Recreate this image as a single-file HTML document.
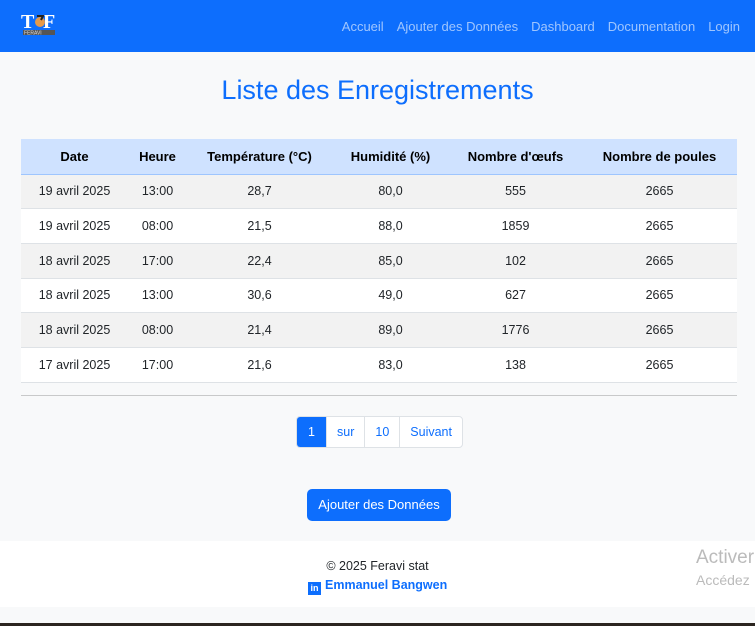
<!DOCTYPE html>
<html><head><meta charset="utf-8"><style>
*{margin:0;padding:0;box-sizing:border-box}
body{width:755px;height:626px;overflow:hidden;background:#f8f9fa;font-family:"Liberation Sans",sans-serif;font-size:13px;color:#212529;position:relative}
.nav{height:52px;background:#0d6efd;position:relative}
.nav .links{position:absolute;right:15px;top:19px;color:rgba(255,255,255,.6);font-size:13px}
.nav .links span{margin-left:13px}
.logo{position:absolute;left:21px;top:11px;width:36px;height:28px}
h1{position:absolute;top:75px;width:100%;text-align:center;font-weight:normal;color:#0d6efd;font-size:27px}
table{position:absolute;left:21px;top:139px;width:716px;border-collapse:collapse}
th{background:#cfe2ff;height:35px;font-weight:bold;font-size:13px;border-bottom:1px solid #9ec5fe;color:#000}
td{height:34.7px;text-align:center;border-bottom:1px solid #dee2e6;font-size:12.5px;color:#212529}
tr:nth-child(even) td{background:#f2f2f2}
tr:nth-child(odd) td{background:#fff}
.hr{position:absolute;left:21px;width:716px;top:395px;border-top:1px solid #c8c9ca}
.pg{position:absolute;left:296px;top:416px;height:32px;display:flex;border:1px solid #dee2e6;border-radius:4px;overflow:hidden;background:#fff}
.pg div{padding:0 10px;line-height:30px;color:#0d6efd;border-left:1px solid #dee2e6;font-size:12.5px}
.pg div:first-child{background:#0d6efd;color:#fff;border:0;width:29px;text-align:center;padding:0}
.btn{position:absolute;left:307px;top:489px;width:144px;height:32px;background:#0d6efd;color:#fff;border-radius:5px;text-align:center;line-height:32px;font-size:13px}
.foot{position:absolute;top:541px;left:0;width:755px;height:66px;background:#fff;text-align:center}
.foot .c{position:absolute;top:18px;width:100%;font-size:12.5px}
.foot .l{position:absolute;top:37px;left:308px;color:#0d6efd;font-weight:bold;font-size:12.5px}
.li{display:inline-block;width:13px;height:13px;background:#0d6efd;color:#fff;font-size:9px;line-height:13px;text-align:center;vertical-align:-2px;margin-right:4px}
.act{position:absolute;left:696px;top:547px;color:#bbb;font-size:19px}
.act2{position:absolute;left:696px;top:572px;color:#bbb;font-size:14px}
.strip{position:absolute;top:623px;left:0;width:755px;height:3px;background:#2b2520}
</style></head><body>
<div class="nav">
<svg class="logo" viewBox="0 0 36 28"><text x="0" y="17" font-family="Liberation Serif" font-size="20" font-weight="bold" fill="#fff">T</text><text x="22" y="17" font-family="Liberation Serif" font-size="20" font-weight="bold" fill="#fff">F</text><circle cx="19" cy="11" r="5" fill="#e69a4a"/><path d="M16 5 h6 l-2 4" stroke="#222" stroke-width="2" fill="none"/><rect x="2" y="19" width="32" height="5" fill="#555"/><text x="3" y="23.5" font-size="5" fill="#ddd" font-family="Liberation Sans">FERAVI</text></svg>
<div class="links"><span>Accueil</span><span>Ajouter des Données</span><span>Dashboard</span><span>Documentation</span><span>Login</span></div>
</div>
<h1>Liste des Enregistrements</h1>
<table>
<tr><th style="width:107px">Date</th><th style="width:59px">Heure</th><th style="width:145px">Température (°C)</th><th style="width:117px">Humidité (%)</th><th style="width:133px">Nombre d'œufs</th><th>Nombre de poules</th></tr>
<tr><td>19 avril 2025</td><td>13:00</td><td>28,7</td><td>80,0</td><td>555</td><td>2665</td></tr>
<tr><td>19 avril 2025</td><td>08:00</td><td>21,5</td><td>88,0</td><td>1859</td><td>2665</td></tr>
<tr><td>18 avril 2025</td><td>17:00</td><td>22,4</td><td>85,0</td><td>102</td><td>2665</td></tr>
<tr><td>18 avril 2025</td><td>13:00</td><td>30,6</td><td>49,0</td><td>627</td><td>2665</td></tr>
<tr><td>18 avril 2025</td><td>08:00</td><td>21,4</td><td>89,0</td><td>1776</td><td>2665</td></tr>
<tr><td>17 avril 2025</td><td>17:00</td><td>21,6</td><td>83,0</td><td>138</td><td>2665</td></tr>
</table>
<div class="hr"></div>
<div class="pg"><div>1</div><div>sur</div><div>10</div><div>Suivant</div></div>
<div class="btn">Ajouter des Données</div>
<div class="foot"><div class="c">© 2025 Feravi stat</div><div class="l"><span class="li">in</span>Emmanuel Bangwen</div></div>
<div class="act">Activer</div><div class="act2">Accédez</div>
<div class="strip"></div>
</body></html>
